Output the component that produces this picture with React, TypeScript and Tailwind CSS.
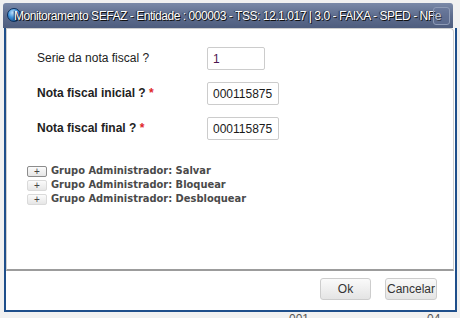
import React from 'react';

const fields = [
  { label: 'Serie da nota fiscal ?', value: '1', required: false, width: 'w-[58px]' },
  { label: 'Nota fiscal inicial ?', value: '000115875', required: true, width: 'w-[72px]' },
  { label: 'Nota fiscal final ?', value: '000115875', required: true, width: 'w-[72px]' },
];

const groups = ['Salvar', 'Bloquear', 'Desbloquear'];

const App: React.FC = () => {
  return (
    <div className="w-[460px] h-[318px] overflow-hidden bg-[#f1f1f1] pt-[3px] pl-[3px] font-['Liberation_Sans',Arial,sans-serif]">
      <div className="w-[454px]">
        {/* title bar */}
        <div className="relative w-[450px] h-[25px] flex items-center overflow-hidden bg-gradient-to-b from-[#7a89a8] via-[#5e6d8e] to-[#4e5d7e] rounded-t-[3px]">
          <div className="absolute left-[4px] top-[5px] w-[14px] h-[14px] rounded-full bg-[radial-gradient(circle_at_40%_30%,#bfe3ff_0%,#3b8fd8_45%,#0d3f7a_100%)] border border-[#0b2f5c]" />
          <span className="relative pl-[11px] text-[12px] tracking-[-0.45px] text-white whitespace-nowrap [text-shadow:1px_1px_0_#111,-1px_0_1px_#222]">
            Monitoramento SEFAZ - Entidade : 000003 - TSS: 12.1.017 | 3.0 - FAIXA - SPED - NFe
          </span>
          <div className="absolute right-[3px] top-[4px] w-[17px] h-[18px] rounded-[3px] border border-[#8e9bb6] bg-[#66759a]/40" />
        </div>

        {/* body */}
        <div className="ml-px w-[453px] h-[284px] flex flex-col border-l-2 border-r-2 border-b-2 border-[#1f4f8b] bg-white">
          <div className="mr-px h-[243px] border border-[#cfcfcf] border-b-2 border-b-[#9c9c9c] rounded-tr-[4px] pt-[18px]">
            <div className="flex flex-col gap-[12px] pl-[30px]">
              {fields.map((f) => (
                <div key={f.label} className="flex items-start">
                  <div
                    className={`w-[170px] pt-[2px] text-[12px] text-[#222] ${f.required ? 'font-bold' : ''}`}
                  >
                    {f.label}
                    {f.required && <span className="text-[#e0262a]"> *</span>}
                  </div>
                  <div
                    className={`${f.width} h-[23px] flex items-center pl-[5px] border border-[#cccccc] rounded-[2px] text-[12px] ${
                      f.required ? 'text-[#1a1a1a]' : 'text-[#4b1650]'
                    }`}
                  >
                    {f.value}
                  </div>
                </div>
              ))}
            </div>

            <div className="mt-[26px] pl-[20px] flex flex-col gap-[3px]">
              {groups.map((g, i) => (
                <div key={g} className="flex items-center h-[11px]">
                  <div
                    className={`w-[20px] h-[11px] flex items-center justify-center rounded-[2px] text-[10px] leading-none text-[#444] bg-gradient-to-b from-[#fbfbfb] to-[#e6e6e6] border ${
                      i === 0 ? 'border-[#8c8c8c]' : 'border-[#dadada]'
                    }`}
                  >
                    +
                  </div>
                  <span className="pl-[4px] text-[11px] font-bold text-[#4a4a4a] font-['DejaVu_Sans_Condensed','DejaVu_Sans',Verdana,sans-serif]">
                    Grupo Administrador: {g}
                  </span>
                </div>
              ))}
            </div>
          </div>

          {/* footer */}
          <div className="flex justify-end gap-[14px] pt-[7px] pr-[18px]">
            <button className="w-[51px] h-[22px] rounded-[3px] border border-[#cdcdcd] bg-gradient-to-b from-[#fafafa] to-[#e4e4e4] text-[12px] text-[#333]">
              Ok
            </button>
            <button className="w-[52px] h-[22px] rounded-[3px] border border-[#cdcdcd] bg-gradient-to-b from-[#fafafa] to-[#e4e4e4] text-[12px] text-[#333]">
              Cancelar
            </button>
          </div>
        </div>
      </div>

      {/* background grid peeking out below the dialog */}
      <div className="flex pt-[1px] text-[12px] leading-none text-[#555]">
        <span className="pl-[286px]">001</span>
        <span className="pl-[118px]">04</span>
      </div>
    </div>
  );
};

export default App;
